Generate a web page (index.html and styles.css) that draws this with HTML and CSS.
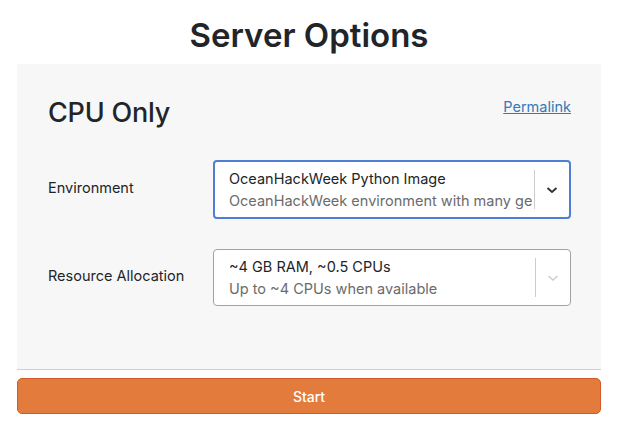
FILE: index.html
```html
<!DOCTYPE html>
<html>
<head>
    <meta charset="utf-8">
    <meta name="viewport" content="width=device-width, initial-scale=1">
    <title>Server Options</title>
    <link rel="stylesheet" href="styles.css">
</head>
<body>
    <div id="spawn-form">
        <h1>Server Options</h1>

        <div class="profile-panel">
            <div class="profile-header">
                <h2>CPU Only</h2>
                <a href="#" class="permalink">Permalink</a>
            </div>

            <div class="option-row">
                <label for="env-select">Environment</label>
                <div id="env-select" class="select-box focused">
                    <div class="select-value">
                        <div class="select-title">OceanHackWeek Python Image</div>
                        <div class="select-desc">OceanHackWeek environment with many geospatial and ocean packages</div>
                    </div>
                    <span class="select-sep"></span>
                    <span class="select-arrow">
                        <svg width="20" height="20" viewBox="0 0 20 20"><path d="M5.5 8 L10 12 L14.5 8" fill="none" stroke="currentColor" stroke-width="1.9"/></svg>
                    </span>
                </div>
            </div>

            <div class="option-row">
                <label for="res-select">Resource Allocation</label>
                <div id="res-select" class="select-box">
                    <div class="select-value">
                        <div class="select-title">~4 GB RAM, ~0.5 CPUs</div>
                        <div class="select-desc">Up to ~4 CPUs when available</div>
                    </div>
                    <span class="select-sep"></span>
                    <span class="select-arrow">
                        <svg width="20" height="20" viewBox="0 0 20 20"><path d="M5.5 8 L10 12 L14.5 8" fill="none" stroke="currentColor" stroke-width="1.4"/></svg>
                    </span>
                </div>
            </div>
        </div>

        <button class="start-btn">Start</button>
    </div>
</body>
</html>
```

FILE: styles.css
```css
/* Page */
body {
    margin: 0;
    font-family: 'Inter', 'Roboto', sans-serif;
    color: #212529;
    background: #ffffff;
}

#spawn-form {
    width: 584px;
    margin-left: 17px;
}

h1 {
    margin: 0;
    padding-top: 15px;
    height: 64px;
    box-sizing: border-box;
    text-align: center;
    font-size: 33px;
    font-weight: 600;
    line-height: 40px;
}

/* Profile card */
.profile-panel {
    background-color: #f7f7f7;
    border-bottom: 1px solid #cfcfcf;
    padding: 30px 30px 63px 31px;
}

.profile-header {
    display: flex;
    justify-content: space-between;
    align-items: flex-start;
    height: 66px;
}

.profile-header h2 {
    margin: 0;
    font-size: 27px;
    font-weight: 500;
    line-height: 38px;
    letter-spacing: -0.2px;
}

.permalink {
    color: #337ab7;
    font-size: 14.5px;
    line-height: 24px;
    margin-top: 1px;
    text-decoration: underline;
}

/* Label + select rows */
.option-row {
    display: flex;
    align-items: center;
}

.option-row + .option-row {
    margin-top: 30px;
}

.option-row label {
    flex: 0 0 165px;
    font-size: 14.5px;
    margin-top: -4px;
}

.select-box {
    flex: 1;
    min-width: 0;
    display: flex;
    align-items: center;
    height: 57px;
    background: #ffffff;
    border: 1px solid #a3a3a3;
    border-radius: 4px;
    box-sizing: border-box;
}

.select-box.focused {
    border: 2px solid #4f7fd4;
    height: 59px;
}

.select-value {
    flex: 1;
    min-width: 0;
    padding-left: 15px;
    padding-right: 2px;
    font-size: 14.5px;
    line-height: 22px;
}

.select-box.focused .select-value {
    padding-left: 14px;
}

.select-title,
.select-desc {
    white-space: nowrap;
    overflow: hidden;
}

.select-desc {
    color: #6b6b6b;
}

.select-sep {
    width: 1px;
    align-self: stretch;
    margin: 8px 0;
    background: #cccccc;
}

.select-arrow {
    flex: 0 0 34px;
    display: flex;
    justify-content: center;
    color: #333333;
}

.select-box:not(.focused) .select-arrow {
    color: #cccccc;
}

/* Start button */
.start-btn {
    display: block;
    width: 100%;
    margin-top: 8px;
    height: 36px;
    background-color: #e27b3c;
    border: 1px solid #d05a2a;
    border-radius: 5px;
    color: #ffffff;
    font-family: 'Inter', 'Roboto', sans-serif;
    font-size: 14px;
    font-weight: 500;
}
```
